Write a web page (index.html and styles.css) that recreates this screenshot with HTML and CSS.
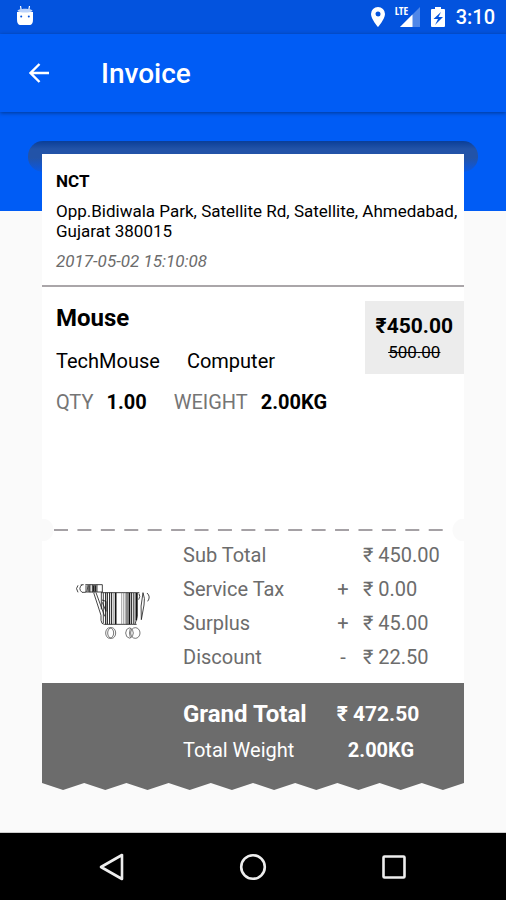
FILE: index.html
```html
<!DOCTYPE html>
<html lang="en">
<head>
<meta charset="utf-8">
<meta name="viewport" content="width=device-width, initial-scale=1">
<title>Invoice</title>
<link rel="stylesheet" href="styles.css">
</head>
<body>
<div class="status">
  <svg class="status-bot" width="18" height="20" viewBox="0 0 18 20" aria-hidden="true">
    <path d="M5.200 4 4.500 0M12.800 4l.7-4" stroke="#fff" stroke-width="1.200" fill="none"/>
    <path d="M1 6h16v7c0 4-1 6-4 6H5c-3 0-4-2-4-6z" fill="#fff"/>
    <path d="M1.500 5c0-3 15-3 15 0-3 2-12 2-15 0z" fill="#bcd3fa"/>
    <circle cx="5.200" cy="10.500" r="1" fill="#0353de"/><circle cx="12.800" cy="10.500" r="1" fill="#0353de"/>
  </svg>
  <div class="status-right">
    <svg width="14" height="20" viewBox="0 0 14 20" aria-hidden="true"><path fill="#fff" fill-rule="evenodd" d="M7 0a7 7 0 0 0-7 7c0 5 7 13 7 13s7-8 7-13a7 7 0 0 0-7-7zm0 4.500a2.500 2.500 0 1 1 0 5 2.500 2.500 0 0 1 0-5z"/></svg>
    <span class="signal">
      <svg width="20" height="20" viewBox="0 0 20 20" aria-hidden="true"><path d="M20 0v20H0z" fill="#fff" opacity=".3"/><path d="M12.500 7.500V20H0z" fill="#fff"/></svg>
      <span class="lte">LTE</span>
    </span>
    <svg width="14" height="20" viewBox="0 0 14 20" aria-hidden="true"><path fill="#fff" fill-rule="evenodd" d="M1 2h3V0h6v2h3q1 0 1 1v16q0 1-1 1H1q-1 0-1-1V3q0-1 1-1zm9 3-7.500 7H7L4 18l8-8H7.500z"/></svg>
    <span class="clock">3:10</span>
  </div>
</div>
<header class="appbar">
  <button class="back" type="button" aria-label="Back">
    <svg width="20" height="20" viewBox="0 0 20 20" aria-hidden="true"><path d="M20 10H2M10.500 1 1.500 10l9 9" fill="none" stroke="#fff" stroke-width="2.400"/></svg>
  </button>
  <h1>Invoice</h1>
</header>
<main>
  <div class="slot"></div>
  <article class="receipt">
    <section class="shop">
      <h2>NCT</h2>
      <p class="address">Opp.Bidiwala Park, Satellite Rd, Satellite, Ahmedabad, Gujarat 380015</p>
      <p class="date">2017-05-02 15:10:08</p>
    </section>
    <section class="items">
      <div class="item">
        <div class="info">
          <h3>Mouse</h3>
          <p class="kinds"><span>TechMouse</span><span>Computer</span></p>
          <dl class="facts"><div><dt>QTY</dt><dd>1.00</dd></div><div><dt>WEIGHT</dt><dd>2.00KG</dd></div></dl>
        </div>
        <div class="price"><strong>₹450.00</strong><s>500.00</s></div>
      </div>
    </section>
    <div class="tear"><svg width="100%" height="2" aria-hidden="true"><line x1="0" y1="1" x2="100%" y2="1" stroke="#888388" stroke-width="1.400" stroke-dasharray="14 9.420"/></svg></div>
    <section class="totals">
      <svg class="cart" width="74" height="55" viewBox="48 57 222 165" aria-hidden="true">
        <g fill="none" stroke="#222" stroke-width="2.500">
          <path d="M54 61q-9 9 0 21M66 59q-13 12 0 23h11M78 61v20M71 59l-9 1M84 60l-3 20M90 59v23M97 59v23M104 60v22M111 59v22M76 59h51v22h-51" />
          <path stroke-width="4" d="M87 61v19M100 61v19M107 61v19"/>
          <path d="M101 83l22 68v15q1 12 10 12h97M123 83h115M124 83v50M130 83v91M108 83l26 71M126 105l12 4v30l-11-27M249 83q-9 40-5 81l8-44q4-20-3-37M261 84q12 11 2 25"/>
          <path d="M220 84v93M232 84v70l-7 24M237 86q5 8-1 18"/>
        </g>
        <g fill="none" stroke="#111">
          <path stroke-width="5" d="M167 83v95M208 83v95M229 84v82"/>
          <path stroke-width="3" d="M137 83v95M142 83v95M149 83v95M155 83v95M201 83v95M214 83v94"/>
          <path stroke-width="2" stroke="#777" d="M161 83v95M185 83v95M191 83v95M196 83v95M224 83v94"/>
        </g>
        <g fill="none" stroke="#333" stroke-width="2">
          <ellipse cx="149" cy="204" rx="12" ry="16"/><ellipse cx="155" cy="204" rx="12" ry="16"/>
          <path d="M209 188q-12 3-12 16t12 16M211 189q-5 15 0 30M211 188q9 8 9 16t-9 16"/>
          <ellipse cx="226" cy="204" rx="14" ry="16"/>
        </g>
      </svg>
      <table>
        <tbody>
          <tr><th scope="row">Sub Total</th><td class="sign"></td><td>₹ 450.00</td></tr>
          <tr><th scope="row">Service Tax</th><td class="sign">+</td><td>₹ 0.00</td></tr>
          <tr><th scope="row">Surplus</th><td class="sign">+</td><td>₹ 45.00</td></tr>
          <tr><th scope="row">Discount</th><td class="sign">-</td><td>₹ 22.50</td></tr>
        </tbody>
      </table>
    </section>
    <dl class="grand">
      <dt class="big">Grand Total</dt><dd class="sum">₹ 472.50</dd>
      <dt>Total Weight</dt><dd>2.00KG</dd>
    </dl>
    <svg class="zigzag" viewBox="0 0 20 1" preserveAspectRatio="none" aria-hidden="true"><path fill="#6c6c6c" d="M0 0 1 1 2 0 3 1 4 0 5 1 6 0 7 1 8 0 9 1 10 0 11 1 12 0 13 1 14 0 15 1 16 0 17 1 18 0 19 1 20 0z"/></svg>
  </article>
</main>
<nav class="navbar" aria-label="System">
  <button type="button" aria-label="Back"><svg width="28" height="28" viewBox="0 0 28 28"><path d="M24 2v24L3 14z"/></svg></button>
  <button type="button" aria-label="Home"><svg width="28" height="28" viewBox="0 0 28 28"><circle cx="14" cy="14" r="11.800"/></svg></button>
  <button type="button" aria-label="Recent apps"><svg width="28" height="28" viewBox="0 0 28 28"><rect x="3.500" y="3.500" width="21" height="21" rx="1"/></svg></button>
</nav>
</body>
</html>
```
FILE: styles.css
```css
* { box-sizing: border-box; }
body {
  margin: 0;
  min-height: 100vh;
  display: flex;
  flex-direction: column;
  font-family: Roboto, "Liberation Sans", sans-serif;
  font-size: 20px;
  line-height: 24px;
  color: #000;
  background: #fafafa;
}
h1, h2, h3, p, dl, dd { margin: 0; }
svg { display: block; }
button { border: 0; padding: 0; background: none; }

.status {
  height: 34px;
  padding: 0 11px 0 16px;
  display: flex;
  align-items: center;
  justify-content: space-between;
  background: #0353de;
  color: #fff;
}
.status-bot { margin-bottom: 2px; }
.status-right { display: flex; align-items: center; gap: 11px; }
.signal { position: relative; margin: 0 0 0 4px; }
.lte {
  position: absolute;
  left: -5px;
  top: -2px;
  font: 700 11px/12px "Open Sans Condensed", "Roboto Condensed", Roboto, sans-serif;
}
.clock { font-weight: 500; }

.appbar {
  position: relative;
  height: 78px;
  padding: 0 28px;
  display: flex;
  align-items: center;
  gap: 51px;
  background: #005cf5;
  color: #fff;
  box-shadow: 0 1px 4px rgba(0, 0, 0, .4);
}
.back { padding: 1px; }
.appbar h1 { font-size: 28px; line-height: 40px; font-weight: 500; padding-top: 2px; }

main {
  flex: 1;
  padding: 29px 28px 42px;
  background: linear-gradient(#005cf5 99px, #fafafa 99px);
}
.slot {
  height: 31px;
  margin-bottom: -18px;
  border-radius: 15px;
  background: linear-gradient(#0a3e98, #2253a8 8px, #2253a8 17px, #1256cf 26px, #0a59e2);
}
.receipt { position: relative; margin: 0 14px; }

.shop {
  padding: 17px 0 14px 14px;
  background: #fff;
  border-bottom: 2px solid #aaa6a9;
  font-size: 17px;
  line-height: 20px;
}
.shop h2 { font-size: 17px; font-weight: 700; }
.address { margin-top: 10px; }
.date { margin-top: 10px; color: #6c6c6c; font-style: italic; }

.items { min-height: 232px; background: #fff; }
.item {
  display: flex;
  justify-content: space-between;
  align-items: flex-start;
  padding: 14px 0 14px 14px;
}
h3 { font-size: 24px; line-height: 34px; font-weight: 700; }
.kinds { display: flex; gap: 27px; margin-top: 14px; }
.facts { display: flex; gap: 27px; margin-top: 17px; }
.facts div { display: flex; gap: 13px; }
dt { color: #757575; }
dd { font-weight: 700; }
.price {
  display: flex;
  flex-direction: column;
  align-items: center;
  padding: 12px 11px 10px;
  background: #ececec;
}
.price strong { font-size: 21px; line-height: 27px; }
.price s { font-size: 17px; line-height: 24px; }

.tear {
  height: 22px;
  padding: 10px 12px;
  background:
    radial-gradient(circle at 0 50%, #fafafa 11px, transparent 12px),
    radial-gradient(circle at 100% 50%, #fafafa 11px, transparent 12px),
    #fff;
}

.totals, .grand {
  display: grid;
  grid-template-columns: 141px 1fr;
}
.totals { padding-bottom: 9px; background: #fff; align-items: center; color: #6c6c6c; }
.cart { margin: 8px 0 0 34px; }
table { width: 259px; margin-top: -3px; border-collapse: collapse; }
th, td { height: 34px; padding: 0; text-align: left; font-weight: 400; }
th { width: 140px; }
.sign { width: 40px; text-align: center; }
.grand {
  grid-template-columns: 125px 114px;
  gap: 10px 16px;
  padding: 18px 0 20px 141px;
  background: #6c6c6c;
}
.grand dt, .grand dd { color: #fff; white-space: nowrap; line-height: 26px; }
.grand dd { text-align: center; }
.grand .big { font-size: 24px; font-weight: 700; }
.grand .sum { font-size: 21px; padding-right: 6px; }
.zigzag { width: 100%; height: 7px; }

.navbar {
  height: 68px;
  padding: 0 98px;
  display: flex;
  align-items: center;
  justify-content: space-between;
  background: #000;
  border-top: 1px solid #ccc;
}
.navbar svg { fill: none; stroke: #eee; stroke-width: 2.600; stroke-linejoin: round; }
```
